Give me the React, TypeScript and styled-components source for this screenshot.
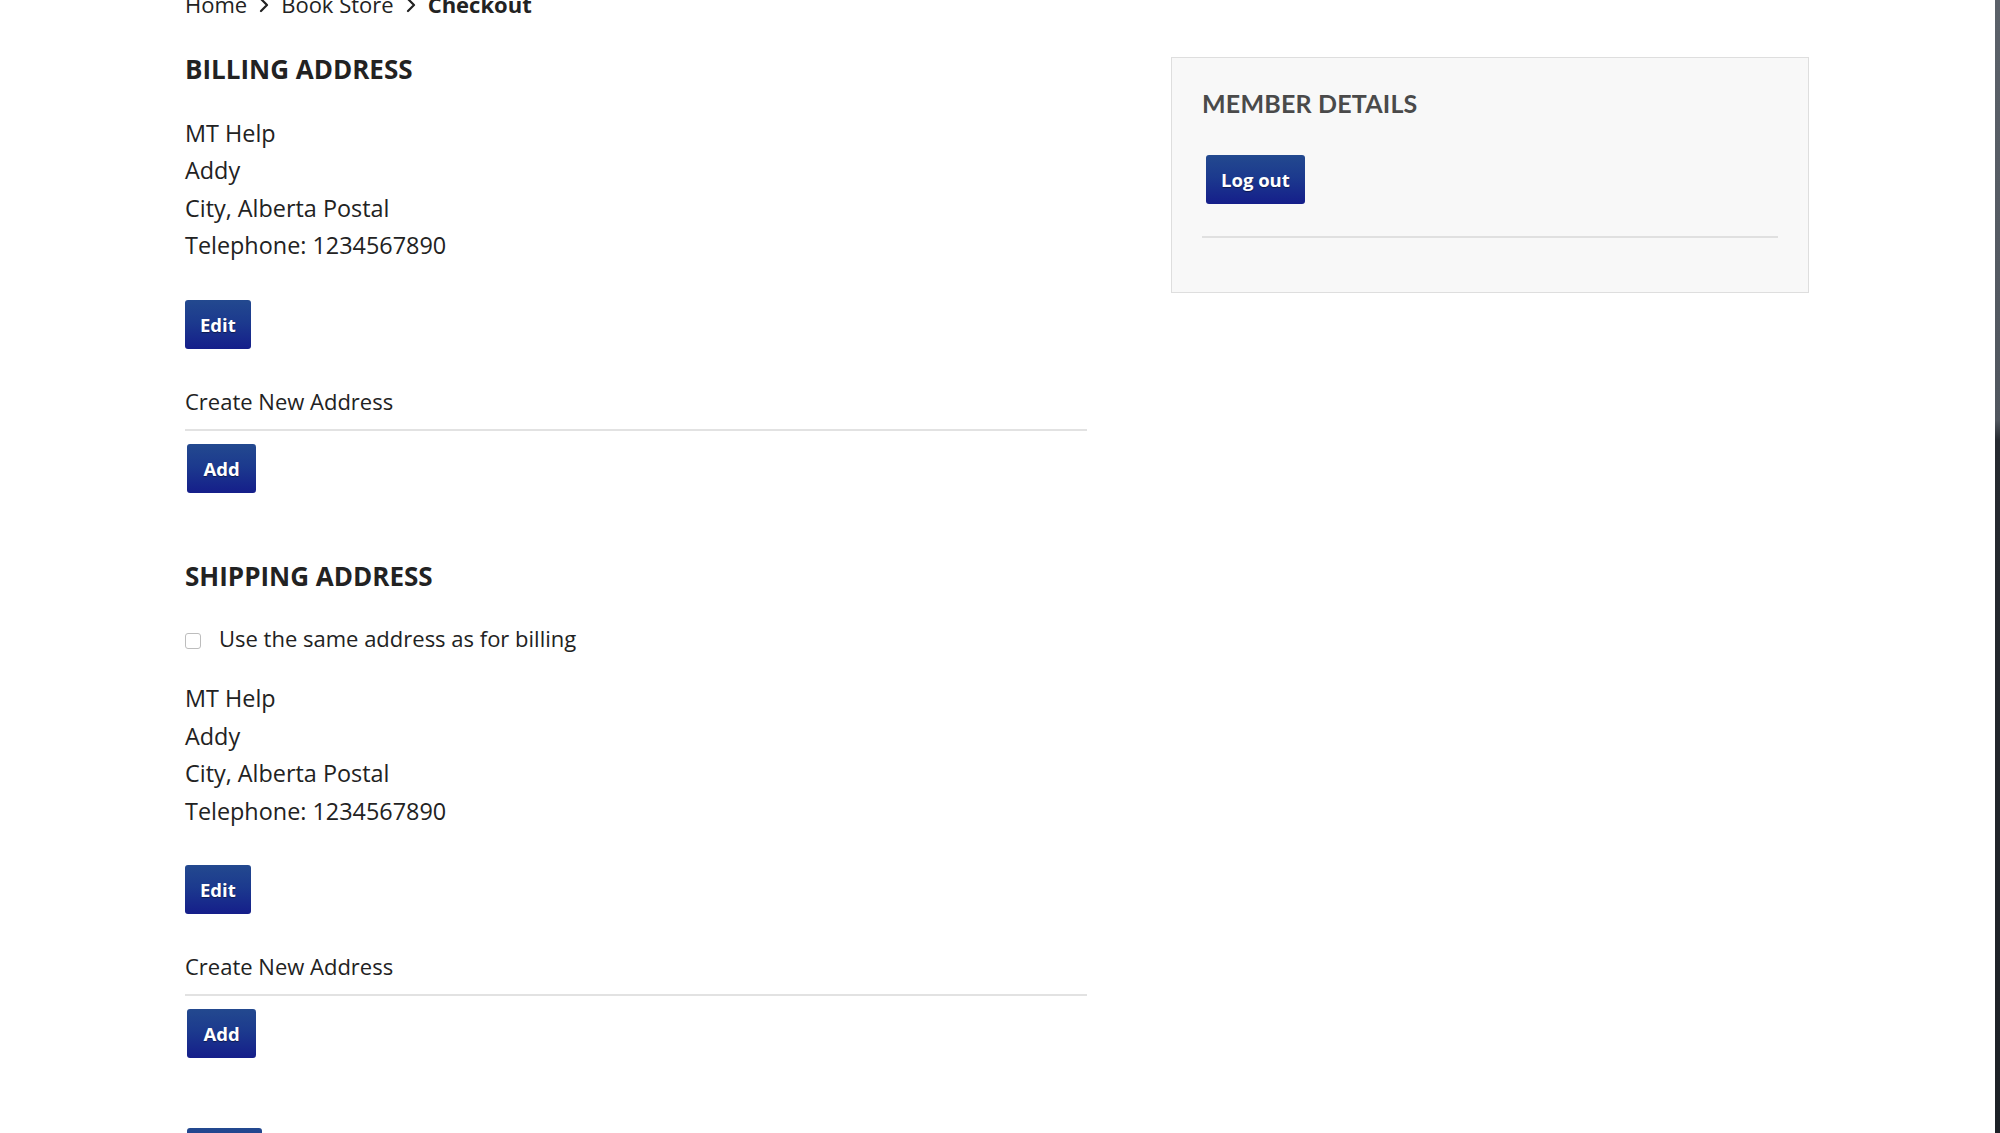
import React from "react";
import styled, { createGlobalStyle } from "styled-components";

const GlobalStyle = createGlobalStyle`
  html, body {
    margin: 0;
    padding: 0;
    background: #ffffff;
  }
  body {
    font-family: "Open Sans", "Liberation Sans", sans-serif;
    color: #222222;
    overflow: hidden;
  }
`;

const Page = styled.div`
  display: flex;
  height: 1133px;
  overflow: hidden;
`;

const Content = styled.div`
  flex: 1;
  display: flex;
  align-items: flex-start;
  padding-left: 185px;
`;

// window edge on the right of the screenshot
const WindowEdge = styled.div`
  width: 5px;
  flex: none;
  background: linear-gradient(to bottom, #5b6169 0, #50565e 420px, #262a30 440px, #1d2126 100%);
`;

const Main = styled.main`
  width: 902px;
  flex: none;
`;

const Crumbs = styled.nav`
  display: flex;
  align-items: center;
  gap: 11px;
  margin-top: -14px;
  font-size: 22px;
  line-height: 37px;
  color: #222;
`;

const Crumb = styled.span<{ $current?: boolean }>`
  font-weight: ${(p) => (p.$current ? 700 : 400)};
`;

const Heading = styled.h2`
  margin: 0;
  font-size: 26px;
  line-height: 28px;
  font-weight: 700;
  color: #222;
  text-transform: uppercase;
`;

const Section = styled.section<{ $top: number }>`
  margin-top: ${(p) => p.$top}px;
`;

const Address = styled.address`
  margin-top: 32px;
  font-style: normal;
  font-size: 23.4px;
  line-height: 37.4px;
`;

const Line = styled.div``;

const Button = styled.button<{ $shift?: number }>`
  display: block;
  height: 49px;
  padding: 0 15px;
  margin-left: ${(p) => p.$shift ?? 0}px;
  border: none;
  border-radius: 3px;
  background: linear-gradient(to bottom, #23498f 0%, #1c3a8e 45%, #151e8a 100%);
  color: #ffffff;
  font-family: "Open Sans", "Liberation Sans", sans-serif;
  font-size: 18.5px;
  font-weight: 700;
  text-shadow: 0 1px 1px rgba(0, 0, 0, 0.45);
  cursor: pointer;
`;

const WideButton = styled(Button)`
  padding: 0 16.5px;
`;

const EditRow = styled.div`
  margin-top: 35px;
`;

const CreateLabel = styled.div`
  margin-top: 34px;
  font-size: 22px;
  line-height: 37.4px;
`;

const Rule = styled.hr`
  margin: 9px 0 13px;
  border: none;
  height: 2px;
  background: #e2e2e2;
`;

const CheckRow = styled.label`
  display: flex;
  align-items: center;
  gap: 18px;
  margin-top: 30px;
  font-size: 22px;
  line-height: 37.4px;
`;

const Check = styled.input`
  appearance: none;
  flex: none;
  margin: 4px 0 0;
  width: 16px;
  height: 16px;
  border: 1px solid #bdbdbd;
  border-radius: 3px;
  background: #fff;
  box-sizing: border-box;
`;

const ShipAddress = styled(Address)`
  margin-top: 23px;
`;

const Sidebar = styled.aside`
  width: 638px;
  flex: none;
  box-sizing: border-box;
  margin: 57px 0 0 84px;
  padding: 30px 30px 30px;
  background: #f8f8f8;
  border: 1px solid #dedede;
`;

const SideHeading = styled.h3`
  margin: 0;
  font-family: Lato, "Open Sans", sans-serif;
  font-size: 25px;
  line-height: 30px;
  font-weight: 700;
  letter-spacing: 0.2px;
  color: #4a4a4a;
  text-transform: uppercase;
`;

const SideButtons = styled.div`
  margin-top: 37px;
`;

const SideRule = styled.hr`
  margin: 32px 0 24px;
  border: none;
  height: 2px;
  background: #e0e0e0;
`;

const Chevron = () => (
  <svg width="12" height="16" viewBox="0 0 12 16" fill="none">
    <path d="M3 2 L9 8 L3 14" stroke="#222" strokeWidth="2.2" strokeLinecap="round" strokeLinejoin="round" />
  </svg>
);

type AddressData = {
  name: string;
  street: string;
  city: string;
  phone: string;
};

const address: AddressData = {
  name: "MT Help",
  street: "Addy",
  city: "City, Alberta Postal",
  phone: "1234567890",
};

function AddressLines({ data }: { data: AddressData }) {
  return (
    <>
      <Line>{data.name}</Line>
      <Line>{data.street}</Line>
      <Line>{data.city}</Line>
      <Line>Telephone: {data.phone}</Line>
    </>
  );
}

function AddressActions() {
  return (
    <>
      <EditRow>
        <Button>Edit</Button>
      </EditRow>
      <CreateLabel>Create New Address</CreateLabel>
      <Rule />
      <WideButton $shift={2}>Add</WideButton>
    </>
  );
}

export default function App() {
  return (
    <>
      <GlobalStyle />
      <Page>
        <Content>
          <Main>
            <Crumbs>
              <Crumb>Home</Crumb>
              <Chevron />
              <Crumb>Book Store</Crumb>
              <Chevron />
              <Crumb $current>Checkout</Crumb>
            </Crumbs>

            <Section $top={32}>
              <Heading>Billing Address</Heading>
              <Address>
                <AddressLines data={address} />
              </Address>
              <AddressActions />
            </Section>

            <Section $top={69}>
              <Heading>Shipping Address</Heading>
              <CheckRow>
                <Check type="checkbox" />
                Use the same address as for billing
              </CheckRow>
              <ShipAddress>
                <AddressLines data={address} />
              </ShipAddress>
              <AddressActions />
            </Section>

            <Section $top={70}>
              <Button $shift={2}>Next</Button>
            </Section>
          </Main>

          <Sidebar>
            <SideHeading>Member Details</SideHeading>
            <SideButtons>
              <Button $shift={4}>Log out</Button>
            </SideButtons>
            <SideRule />
          </Sidebar>
        </Content>
        <WindowEdge />
      </Page>
    </>
  );
}
